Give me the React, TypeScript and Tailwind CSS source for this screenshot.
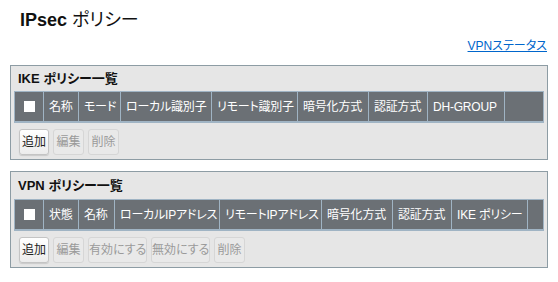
import React from "react";

type Col = { label: string; w: number };

const ikeCols: Col[] = [
	{ label: "名称", w: 35 },
	{ label: "モード", w: 42 },
	{ label: "ローカル識別子", w: 91 },
	{ label: "リモート識別子", w: 86 },
	{ label: "暗号化方式", w: 71 },
	{ label: "認証方式", w: 59 },
	{ label: "DH-GROUP", w: 77 },
	{ label: "", w: 39 },
];

const vpnCols: Col[] = [
	{ label: "状態", w: 35 },
	{ label: "名称", w: 36 },
	{ label: "ローカルIPアドレス", w: 105 },
	{ label: "リモートIPアドレス", w: 102 },
	{ label: "暗号化方式", w: 71 },
	{ label: "認証方式", w: 59 },
	{ label: "IKE ポリシー", w: 76 },
	{ label: "", w: 16 },
];

type Btn = { label: string; w: number; disabled?: boolean };

function Button({ label, w, disabled }: Btn) {
	return (
		<button
			disabled={disabled}
			style={{ width: w }}
			className={
				disabled
					? "h-[26px] rounded-[3px] border border-[#d6d6d6] bg-[#e9e9e9] text-[12px] text-[#9a9a9a] whitespace-nowrap"
					: "h-[26px] rounded-[3px] border border-[#c4c4c4] bg-gradient-to-b from-white to-[#ececec] text-[12px] text-[#222] whitespace-nowrap shadow-[0_1px_1px_rgba(0,0,0,0.12)]"
			}
		>
			{label}
		</button>
	);
}

function Panel({
	title,
	cols,
	buttons,
	titleH,
}: {
	title: string;
	cols: Col[];
	buttons: Btn[];
	titleH: string;
}) {
	return (
		<div className="mx-[10px] border border-[#8d9ca4] bg-[#e6e6e6] px-[3px] pb-[4px]">
			<div className={`${titleH} pl-[4px] text-[13px] font-bold text-[#111]`}>
				{title}
			</div>
			<div className="flex h-[32px] border-t border-b-2 border-l border-[#a0b4c4] bg-[#6b7075] text-[12px] tracking-[-0.2px] text-white">
				<div className="flex w-[29px] shrink-0 items-center justify-center border-r border-[#a0b4c4]">
					<div className="h-[11px] w-[11px] bg-white" />
				</div>
				{cols.map((c, i) => (
					<div
						key={i}
						style={{ width: c.w }}
						className="flex shrink-0 items-center overflow-hidden whitespace-nowrap border-r border-[#a0b4c4] pl-[5px]"
					>
						{c.label}
					</div>
				))}
			</div>
			<div className="mt-[6px] flex gap-[4px] pl-[5px]">
				{buttons.map((b, i) => (
					<Button key={i} {...b} />
				))}
			</div>
		</div>
	);
}

export default function App() {
	return (
		<div
			className="h-[282px] w-[558px] overflow-hidden bg-white [font-feature-settings:'palt']"
			style={{ fontFamily: "'Liberation Sans', 'Noto Sans CJK JP', sans-serif" }}
		>
			<h1 className="pl-[20px] pt-[8px] text-[18px] leading-[24px] text-[#111]">
				<span className="font-bold">IPsec</span> ポリシー
			</h1>
			<div className="mt-[6px] flex justify-end pr-[11px] text-[12px] leading-[16px]">
				<a href="#" className="text-[#0066cc] underline">
					VPNステータス
				</a>
			</div>
			<div className="mt-[11px]">
				<Panel
					title="IKE ポリシー一覧"
					titleH="h-[25px] leading-[25px]"
					cols={ikeCols}
					buttons={[
						{ label: "追加", w: 30 },
						{ label: "編集", w: 31, disabled: true },
						{ label: "削除", w: 31, disabled: true },
					]}
				/>
			</div>
			<div className="mt-[11px]">
				<Panel
					title="VPN ポリシー一覧"
					titleH="h-[27px] leading-[28px]"
					cols={vpnCols}
					buttons={[
						{ label: "追加", w: 30 },
						{ label: "編集", w: 31, disabled: true },
						{ label: "有効にする", w: 59, disabled: true },
						{ label: "無効にする", w: 59, disabled: true },
						{ label: "削除", w: 31, disabled: true },
					]}
				/>
			</div>
		</div>
	);
}
